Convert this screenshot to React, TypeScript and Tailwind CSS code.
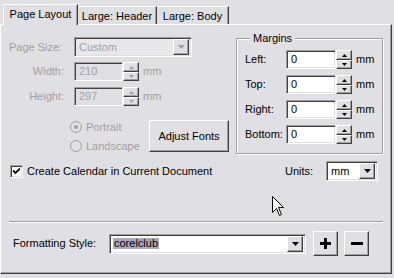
import React from "react";

const raised =
  "border border-t-white border-l-white border-r-[#404040] border-b-[#404040] shadow-[inset_-1px_-1px_0_#a0a0a0] bg-[#e0dfe3]";
const sunken =
  "border border-t-[#a0a0a0] border-l-[#a0a0a0] border-r-white border-b-white shadow-[inset_1px_1px_0_#404040,inset_-1px_-1px_0_#e0dfe3]";

const Tri = ({ up = false, color = "#000", w = 7 }: { up?: boolean; color?: string; w?: number }) => (
  <svg width={w} height={Math.ceil(w / 2)} viewBox={`0 0 ${w} ${Math.ceil(w / 2)}`}>
    {up ? (
      <path d={`M0 ${Math.ceil(w / 2)} L${w / 2} 0 L${w} ${Math.ceil(w / 2)} Z`} fill={color} />
    ) : (
      <path d={`M0 0 L${w} 0 L${w / 2} ${Math.ceil(w / 2)} Z`} fill={color} />
    )}
  </svg>
);

const Spinner = ({ disabled }: { disabled?: boolean }) => {
  const c = disabled ? "#a0a0a4" : "#000";
  return (
    <div className="flex h-[19px] w-[16px] flex-col">
      <div className={`${raised} flex h-[10px] items-center justify-center`}>
        <Tri up w={5} color={c} />
      </div>
      <div className={`${raised} flex h-[9px] items-center justify-center`}>
        <Tri w={5} color={c} />
      </div>
    </div>
  );
};

const Field = ({ value, w, disabled }: { value: string; w: string; disabled?: boolean }) => (
  <div
    className={`${sunken} ${w} flex h-[19px] items-center pl-[4px] ${
      disabled ? "bg-[#e0dfe3] text-[#a0a0a4]" : "bg-white"
    }`}
  >
    {value}
  </div>
);

const Select = ({
  value,
  w,
  disabled,
  highlight,
}: {
  value: string;
  w: string;
  disabled?: boolean;
  highlight?: boolean;
}) => (
  <div
    className={`${sunken} ${w} flex h-[20px] items-center justify-between pl-[3px] pr-[2px] ${
      disabled ? "bg-[#e8e7ea] text-[#a0a0a4]" : "bg-white"
    }`}
  >
    <span className={highlight ? "bg-[#a9a8ba] px-[1px]" : "pl-[1px]"}>{value}</span>
    <div className={`${raised} flex h-[16px] w-[16px] items-center justify-center`}>
      <Tri color={disabled ? "#a0a0a4" : "#000"} />
    </div>
  </div>
);

const MarginRow = ({ label }: { label: string }) => (
  <div className="flex h-[19px] items-center">
    <span className="w-[41px]">{label}</span>
    <Field value="0" w="w-[50px]" />
    <Spinner />
    <span className="ml-[4px]">mm</span>
  </div>
);

export default function App() {
  return (
    <div
      className="relative h-[278px] w-[394px] overflow-hidden bg-[#e0dfe3] text-[11px] leading-none text-black"
      style={{ fontFamily: '"Liberation Sans", Arial, sans-serif' }}
    >
      {/* Tabs */}
      <div className="flex h-[24px] items-end pl-[3px]">
        <div className="relative z-10 -mb-px flex h-[21px] w-[75px] items-center justify-center rounded-tl-[2px] border-l border-t border-r border-l-white border-t-white border-r-[#404040] bg-[#e0dfe3] pb-[1px] shadow-[inset_-1px_0_0_#a0a0a0]">
          Page Layout
        </div>
        <div className="flex h-[18px] w-[79px] items-center justify-center rounded-tl-[2px] border-t border-r border-t-white border-r-[#404040] pt-[1px] shadow-[inset_-1px_0_0_#a0a0a0]">
          Large: Header
        </div>
        <div className="flex h-[18px] w-[72px] items-center justify-center rounded-tl-[2px] border-t border-r border-t-white border-r-[#404040] pt-[1px] shadow-[inset_-1px_0_0_#a0a0a0]">
          Large: Body
        </div>
      </div>

      {/* Panel */}
      <div className="h-[250px] w-[392px] border border-t-white border-l-white border-r-[#404040] border-b-[#404040] pl-[8px] pt-[12px] shadow-[inset_-1px_-1px_0_#a0a0a0]">
        <div className="flex">
          {/* Left column */}
          <div className="w-[227px]">
            <div className="flex h-[20px] items-center text-[#a0a0a4]">
              <span className="w-[65px]">Page Size:</span>
              <Select value="Custom" w="w-[118px]" disabled />
            </div>
            <div className="mt-[5px] flex h-[19px] items-center text-[#a0a0a4]">
              <span className="w-[65px] pr-[10px] text-right">Width:</span>
              <Field value="210" w="w-[49px]" disabled />
              <Spinner disabled />
              <span className="ml-[4px]">mm</span>
            </div>
            <div className="mt-[6px] flex h-[19px] items-center text-[#a0a0a4]">
              <span className="w-[65px] pr-[10px] text-right">Height:</span>
              <Field value="297" w="w-[49px]" disabled />
              <Spinner disabled />
              <span className="ml-[4px]">mm</span>
            </div>
            <div className="mt-[14px] flex items-start">
              <div className="ml-[61px] flex w-[79px] flex-col gap-[7px] pt-[1px] text-[#a0a0a4]">
                <div className="flex h-[12px] items-center gap-[4px]">
                  <span className="flex h-[12px] w-[12px] items-center justify-center rounded-full border border-[#a0a0a4] bg-[#e0dfe3]">
                    <span className="h-[4px] w-[4px] rounded-full bg-[#a0a0a4]" />
                  </span>
                  Portrait
                </div>
                <div className="flex h-[12px] items-center gap-[4px]">
                  <span className="h-[12px] w-[12px] rounded-full border border-[#a0a0a4] bg-[#e0dfe3]" />
                  Landscape
                </div>
              </div>
              <div className={`${raised} flex h-[32px] w-[80px] items-center justify-center`}>
                Adjust Fonts
              </div>
            </div>
          </div>

          {/* Margins group */}
          <div className="relative mt-[1px] h-[116px] w-[147px] border border-[#a0a0a0] pl-[8px] pt-[11px] shadow-[1px_1px_0_white,inset_1px_1px_0_white]">
            <span className="absolute -top-[6px] left-[13px] bg-[#e0dfe3] px-[3px]">Margins</span>
            <div className="flex flex-col gap-[6px]">
              <MarginRow label="Left:" />
              <MarginRow label="Top:" />
              <MarginRow label="Right:" />
              <MarginRow label="Bottom:" />
            </div>
          </div>
        </div>

        {/* Checkbox + units */}
        <div className="mt-[7px] flex h-[20px] items-center">
          <div className="flex w-[276px] items-center gap-[4px] pl-[1px]">
            <span className={`${sunken} flex h-[13px] w-[13px] items-center justify-center bg-white`}>
              <svg width="7" height="7" viewBox="0 0 7 7">
                <path d="M0 2.5 L2.5 5 L7 0.5" fill="none" stroke="#000" strokeWidth="1.8" />
              </svg>
            </span>
            Create Calendar in Current Document
          </div>
          <span className="w-[41px]">Units:</span>
          <Select value="mm" w="w-[52px]" />
        </div>

        {/* Separator */}
        <div className="mt-[40px] h-[2px] w-[374px] border-t border-b border-t-[#a0a0a0] border-b-white" />

        {/* Formatting row */}
        <div className="mt-[8px] flex items-center">
          <span className="w-[100px] pl-[4px]">Formatting Style:</span>
          <Select value="corelclub" w="w-[197px]" highlight />
          <div className={`${raised} ml-[7px] flex h-[25px] w-[25px] items-center justify-center`}>
            <svg width="11" height="11" viewBox="0 0 11 11">
              <path d="M4 0h3v4h4v3H7v4H4V7H0V4h4z" fill="#000" />
            </svg>
          </div>
          <div className={`${raised} ml-[6px] flex h-[25px] w-[25px] items-center justify-center`}>
            <svg width="12" height="3" viewBox="0 0 12 3">
              <rect width="12" height="3" fill="#000" />
            </svg>
          </div>
        </div>
      </div>

      {/* Mouse cursor */}
      <svg className="absolute left-[272px] top-[196px]" width="13" height="21" viewBox="0 0 13 21">
        <path
          d="M0.5 0.5 L0.5 16.5 L4.5 12.5 L7.5 19.5 L9.5 18.5 L6.5 11.5 L11.5 11.5 Z"
          fill="#fff"
          stroke="#000"
          strokeWidth="1"
        />
      </svg>
    </div>
  );
}
